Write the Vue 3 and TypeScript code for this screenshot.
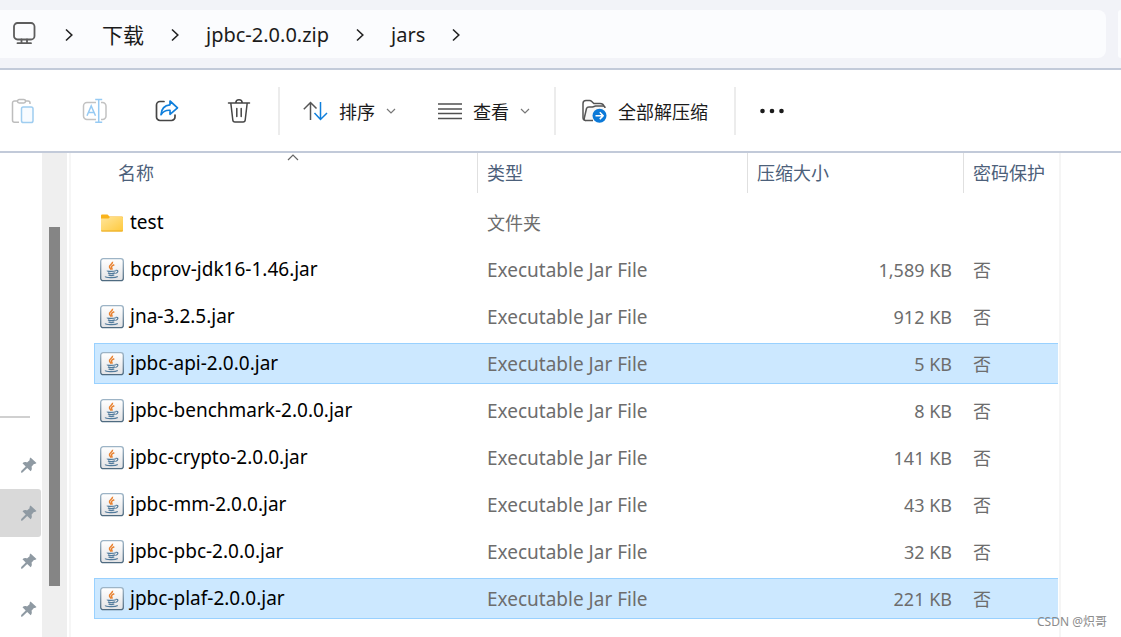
<script setup lang="ts">
interface Entry {
  name: string
  folder?: boolean
  type: string
  size: string
  locked: string
  selected?: boolean
}

const jar = 'Executable Jar File'

const crumbs: string[] = ['下载', 'jpbc-2.0.0.zip', 'jars']

const entries: Entry[] = [
  { name: 'test', folder: true, type: '文件夹', size: '', locked: '' },
  { name: 'bcprov-jdk16-1.46.jar', type: jar, size: '1,589 KB', locked: '否' },
  { name: 'jna-3.2.5.jar', type: jar, size: '912 KB', locked: '否' },
  { name: 'jpbc-api-2.0.0.jar', type: jar, size: '5 KB', locked: '否', selected: true },
  { name: 'jpbc-benchmark-2.0.0.jar', type: jar, size: '8 KB', locked: '否' },
  { name: 'jpbc-crypto-2.0.0.jar', type: jar, size: '141 KB', locked: '否' },
  { name: 'jpbc-mm-2.0.0.jar', type: jar, size: '43 KB', locked: '否' },
  { name: 'jpbc-pbc-2.0.0.jar', type: jar, size: '32 KB', locked: '否' },
  { name: 'jpbc-plaf-2.0.0.jar', type: jar, size: '221 KB', locked: '否', selected: true },
]

const pins = [false, true, false, false]
</script>

<template>
  <div class="explorer">
    <header class="address">
      <nav class="path" aria-label="Path">
        <svg class="monitor" width="24" height="24" viewBox="0 0 24 24" fill="none" stroke="#5d5d5d" stroke-width="1.8" aria-hidden="true">
          <rect x="2" y="1" width="20.500" height="16.500" rx="3.500" />
          <path d="M9.500 17.500v3M15 17.500v3M5.500 21.200h13.500" stroke-linecap="round" />
        </svg>
        <svg class="arrow root" width="10" height="14" viewBox="0 0 10 14" aria-hidden="true"><path d="M2 1.500l5.800 5.500L2 12.500" /></svg>
        <template v-for="(c, i) in crumbs" :key="c">
          <a class="crumb" :class="{ han: i === 0 }" href="#">{{ c }}</a>
          <svg class="arrow" width="10" height="14" viewBox="0 0 10 14" aria-hidden="true"><path d="M2 1.500l5.800 5.500L2 12.500" /></svg>
        </template>
      </nav>
      <div class="search"></div>
    </header>

    <div class="toolbar" role="toolbar">
      <button class="tool icon-only" type="button" aria-label="Paste" disabled>
        <svg width="24" height="26" viewBox="0 0 24 26" fill="none" stroke-width="1.500">
          <path d="M8 24.300H3.500a2 2 0 0 1-2-2V5a2 2 0 0 1 2-2H6M14 3h3a2 2 0 0 1 2 2v1" stroke="#bdbdbd" />
          <rect x="6.500" y="1.500" width="8" height="3.500" rx="1.700" stroke="#bdbdbd" />
          <rect x="10.500" y="9" width="11.500" height="15.500" rx="1.800" stroke="#9fcdf0" fill="#f7fbff" />
        </svg>
      </button>
      <button class="tool icon-only" type="button" aria-label="Rename" disabled>
        <svg width="26" height="26" viewBox="0 0 26 26" fill="none" stroke-width="1.500">
          <path d="M14 21.500H5a3.500 3.500 0 0 1-3.500-3.500V8A3.500 3.500 0 0 1 5 4.500h9M19 4.500h1.500A3.500 3.500 0 0 1 24 8v10a3.500 3.500 0 0 1-3.500 3.500H19" stroke="#c2c2c2" />
          <path d="M5 17.800L9.200 8l4.300 9.800M6.500 14.500h5.500M13.200 1.500h7M13.200 24.300h7M16.700 1.500v22.800" stroke="#96caf3" />
        </svg>
      </button>
      <button class="tool icon-only" type="button" aria-label="Share">
        <svg width="24" height="24" viewBox="0 0 24 24" fill="none" stroke-width="1.700" stroke-linejoin="round">
          <path d="M9 2.500H5a3.500 3.500 0 0 0-3.500 3.500v12A3.500 3.500 0 0 0 5 21.500h11.500a3.500 3.500 0 0 0 3.500-3.500v-2" stroke="#454545" stroke-linecap="round" />
          <path d="M15 2l7.500 6.800-7.500 6.500v-4c-4.500-.3-7 1.200-9 4.400.3-5.500 3.500-9.400 9-9.900z" stroke="#0f7fdc" />
        </svg>
      </button>
      <button class="tool icon-only last-icon" type="button" aria-label="Delete">
        <svg width="24" height="26" viewBox="0 0 24 26" fill="none" stroke="#454545" stroke-width="1.500" stroke-linecap="round" stroke-linejoin="round">
          <path d="M1.500 5h21M8.800 5a3.200 3.200 0 0 1 6.400 0M3.800 5l2 17a2.200 2.200 0 0 0 2.200 2h8a2.200 2.200 0 0 0 2.200-2l2-17M9.800 10.500v8M14.200 10.500v8" />
        </svg>
      </button>
      <span class="divider"></span>
      <button class="tool menu sort" type="button">
        <svg width="25" height="20" viewBox="0 0 25 20" fill="none" stroke-width="1.500">
          <path d="M.8 8.200L7.500 1.500l6 6M7.500 1.500V19" stroke="#555" />
          <path d="M11.500 12l6 6.500 6.500-6.500M17.500 1v17.500" stroke="#0f7fdc" />
        </svg>
        <span>排序</span>
        <svg class="chevron" width="10" height="6" viewBox="0 0 10 6"><path d="M1 1l4 4 4-4" /></svg>
      </button>
      <button class="tool menu view" type="button">
        <svg width="24" height="18" viewBox="0 0 24 18" stroke="#505050" stroke-width="1.400">
          <path d="M0 2h24M0 7h24M0 11.500h24M0 16.500h24" />
        </svg>
        <span>查看</span>
        <svg class="chevron" width="10" height="6" viewBox="0 0 10 6"><path d="M1 1l4 4 4-4" /></svg>
      </button>
      <span class="divider"></span>
      <button class="tool menu extract" type="button">
        <svg width="25" height="24" viewBox="0 0 25 24" fill="none" stroke="#555" stroke-width="1.500" stroke-linejoin="round">
          <path d="M4 21.500c-2 0-3-1-3-3V4.500c0-2 1-3 3-3h3.500c1.200 0 1.700.4 2.500 1.200L11.800 4.500H18c2.300 0 3.800 1.300 4 3.500" />
          <path d="M11 21.500H4c-1.500 0-2-1-1.700-2.500L4.500 9.500C4.900 8.300 5.600 8 7 8h3.500l3-1h7.500c1.500 0 2 .5 2 2" fill="#f6f6f6" />
          <circle cx="17.500" cy="16.700" r="7" fill="#0b79d8" stroke="none" />
          <path d="M13.500 16.700h7.500M17.800 13.300l3.400 3.400-3.400 3.400" stroke="#fff" stroke-width="1.600" />
        </svg>
        <span>全部解压缩</span>
      </button>
      <span class="divider"></span>
      <button class="tool more" type="button" aria-label="More">
        <svg width="24" height="6" viewBox="0 0 24 6" fill="#1b1b1b"><circle cx="2.500" cy="3" r="2.300" /><circle cx="12" cy="3" r="2.300" /><circle cx="21.500" cy="3" r="2.300" /></svg>
      </button>
    </div>

    <div class="body">
      <aside class="sidebar">
        <hr />
        <div v-for="(active, i) in pins" :key="i" class="pin" :class="{ active }">
          <svg width="16" height="16" viewBox="0 0 16 16" fill="#8f9aa3" aria-hidden="true">
            <path d="M9.500 0.500L15.500 6c-.8.8-1.600 1-2.600 1L10.500 9.700c.7 1.900.3 3.300-.8 4.500L6.200 11 1.500 15.500 0 15.700l.2-1.600L4.700 9.500 1.500 6.200C2.800 5 4.200 4.800 6 5.400L8.600 3.200C8.400 2.200 8.700 1.300 9.500.5z" />
          </svg>
        </div>
      </aside>
      <div class="track"><div class="thumb"></div></div>

      <main class="files">
        <table>
          <colgroup>
            <col />
            <col class="col-type" />
            <col class="col-size" />
            <col class="col-lock" />
          </colgroup>
          <thead>
            <tr>
              <th scope="col" aria-sort="ascending">
                <div class="head first">名称
                  <svg class="sorted" width="12" height="7" viewBox="0 0 12 7" aria-hidden="true"><path d="M1 6l5-5 5 5" /></svg>
                </div>
              </th>
              <th scope="col"><div class="head">类型</div></th>
              <th scope="col"><div class="head">压缩大小</div></th>
              <th scope="col"><div class="head">密码保护</div></th>
            </tr>
          </thead>
          <tbody>
            <tr v-for="e in entries" :key="e.name" :class="{ selected: e.selected }">
              <td>
                <div class="cell name">
                  <svg v-if="e.folder" width="24" height="24" viewBox="0 0 24 24" aria-hidden="true">
                    <defs>
                      <linearGradient id="folder" x1="0" y1="0" x2="1" y2="1"><stop offset="0" stop-color="#ffe59a" /><stop offset="1" stop-color="#ffc93c" /></linearGradient>
                    </defs>
                    <path d="M1 4.500q0-1 1-1h5.500l2 2H22q1 0 1 1V12H1z" fill="#f9b31c" />
                    <path d="M1 7.500h7.500l1.500-1.500H22q1 0 1 1V19.500q0 1-1 1H2q-1 0-1-1z" fill="url(#folder)" />
                    <path d="M1 19.500h22q0 1-1 1H2q-1 0-1-1z" fill="#e9a91f" />
                  </svg>
                  <svg v-else width="24" height="24" viewBox="0 0 24 24" fill="none" aria-hidden="true">
                    <defs>
                      <linearGradient id="tile" x1="0" y1="0" x2="0" y2="1"><stop offset="0" stop-color="#fff" /><stop offset="1" stop-color="#e3e3e5" /></linearGradient>
                      <linearGradient id="edge" x1="0" y1="0" x2="0" y2="1"><stop offset="0" stop-color="#9db4c6" /><stop offset="1" stop-color="#4e6a80" /></linearGradient>
                    </defs>
                    <rect x=".7" y=".7" width="22.600" height="22" rx="2.500" fill="url(#tile)" stroke="url(#edge)" stroke-width="1.300" />
                    <path d="M12.500 3.800c.6 2.200-3.800 3.200-3 5.300.3.900 1.200 1.500 1.700 2.500M14.300 6.700c-2 .8-3.300 1.700-2.600 2.900.5.800.7 1.300-.1 2" stroke="#e8812f" stroke-width="1.500" />
                    <path d="M7.500 12.700c-1.500.8 6 1 8.300.1M8 14.900c1.500.8 5 .8 7 0M8.500 17c1.500.6 4 .6 5.800 0M5.500 18.300c-1.200 1.500 9.500 2 12.300.2M15.800 12.300c3.200-.4 2.500 2.400-.4 3.200" stroke="#527b9c" stroke-width="1.200" />
                  </svg>
                  <span>{{ e.name }}</span>
                </div>
              </td>
              <td><div class="cell" :class="{ latin: !e.folder }">{{ e.type }}</div></td>
              <td><div class="cell size">{{ e.size }}</div></td>
              <td><div class="cell">{{ e.locked }}</div></td>
            </tr>
          </tbody>
        </table>
      </main>
      <div class="rest"></div>
    </div>
    <div class="watermark">CSDN @炽哥</div>
  </div>
</template>

<style>
body {
  margin: 0;
}
</style>

<style scoped>
.explorer {
  position: relative;
  display: flex;
  flex-direction: column;
  height: 100vh;
  overflow: hidden;
  background: #fff;
  color: #1b1b1b;
  font-family: "Noto Sans", "Noto Sans CJK SC", sans-serif;
  font-size: 18px;
}
.address {
  display: flex;
  gap: 12px;
  padding: 10px 0;
  background: #f2f3f8;
  border-bottom: 2px solid #c2cad9;
}
.path {
  display: flex;
  flex: 1;
  align-items: center;
  height: 48px;
  padding-left: 12px;
  border-radius: 0 8px 8px 0;
  background: #fbfcfe;
}
.search {
  width: 3px;
  border-radius: 8px 0 0 8px;
  background: #fbfcfe;
}
.arrow {
  flex: none;
  margin: 0 26px;
  padding-top: 2px;
  fill: none;
  stroke: #222;
  stroke-width: 1.6;
}
.arrow.root {
  margin: 0 28px;
}
.crumb {
  padding-top: 2px;
  color: #1b1b1b;
  font-size: 20px;
  line-height: 28px;
  text-decoration: none;
}
.crumb.han {
  font-size: 21px;
}
.toolbar {
  display: flex;
  align-items: center;
  height: 81px;
  flex: none;
  border-bottom: 2px solid #c2cad9;
}
.tool {
  display: flex;
  align-items: center;
  justify-content: center;
  height: 48px;
  padding: 0;
  border: 0;
  background: none;
  color: #1b1b1b;
  font: inherit;
}
.icon-only {
  width: 46px;
  margin-right: 26px;
}
.last-icon {
  margin-right: 16px;
}
.divider {
  width: 2px;
  height: 48px;
  background: #ececec;
}
.menu {
  gap: 11px;
}
.sort {
  margin-left: 23px;
}
.view {
  margin: 0 24px 0 42px;
}
.extract {
  margin: 0 26px;
}
.more {
  margin-left: 24px;
}
.chevron {
  fill: none;
  stroke: #777;
  stroke-width: 1.2;
}
.body {
  display: flex;
  flex: 1;
  min-height: 0;
}
.sidebar {
  width: 42px;
}
.sidebar hr {
  height: 2px;
  margin: 263px 12px 23px 0;
  border: 0;
  background: #d0d0d0;
}
.pin {
  display: flex;
  align-items: center;
  justify-content: flex-end;
  height: 48px;
  margin-right: 1px;
  padding-right: 4px;
  box-sizing: border-box;
  border-radius: 0 3px 3px 0;
}
.pin.active {
  background: #d9d9d9;
}
.track {
  width: 25px;
  padding-top: 74px;
  box-sizing: border-box;
  background: #efefef;
}
.thumb {
  width: 11px;
  height: 359px;
  margin: 0 auto;
  background: #858585;
}
.files {
  flex: 1;
  margin-left: 2px;
  padding-left: 23px;
  border-left: 2px solid #f6f6f6;
}
.rest {
  width: 62px;
  margin-left: 1px;
  border-left: 2px solid #f5f5f5;
  box-sizing: border-box;
}
table {
  width: 100%;
  table-layout: fixed;
  border-collapse: collapse;
}
.col-type {
  width: 270px;
}
.col-size {
  width: 216px;
}
.col-lock {
  width: 95px;
}
th {
  padding: 0 0 9px;
  color: #4c607a;
  font-weight: 400;
  text-align: left;
}
td {
  padding: 0 0 6px;
  color: #6d6d6d;
}
.head {
  height: 40px;
  padding-left: 9px;
  box-sizing: border-box;
  border-left: 1px solid #e0e0e0;
  line-height: 40px;
}
.head.first {
  position: relative;
  padding-left: 23px;
  border-left-color: transparent;
}
.sorted {
  position: absolute;
  top: 1px;
  left: 50%;
  margin-left: 1px;
  fill: none;
  stroke: #666;
  stroke-width: 1.2;
}
.cell {
  height: 41px;
  padding-left: 10px;
  box-sizing: border-box;
  border: solid transparent;
  border-width: 1px 0;
  line-height: 41px;
  white-space: nowrap;
}
.name {
  display: flex;
  align-items: center;
  gap: 6px;
  padding-left: 5px;
  border-left-width: 1px;
  color: #000;
  font-size: 19px;
}
.latin {
  font-size: 19px;
}
.size {
  padding-right: 11px;
  text-align: right;
}
.selected .cell {
  border-color: #99d1ff;
  background: #cce8ff;
}
.watermark {
  position: absolute;
  right: 14px;
  bottom: 6px;
  color: #8c8c8c;
  font-size: 12px;
  line-height: 18px;
}
</style>
